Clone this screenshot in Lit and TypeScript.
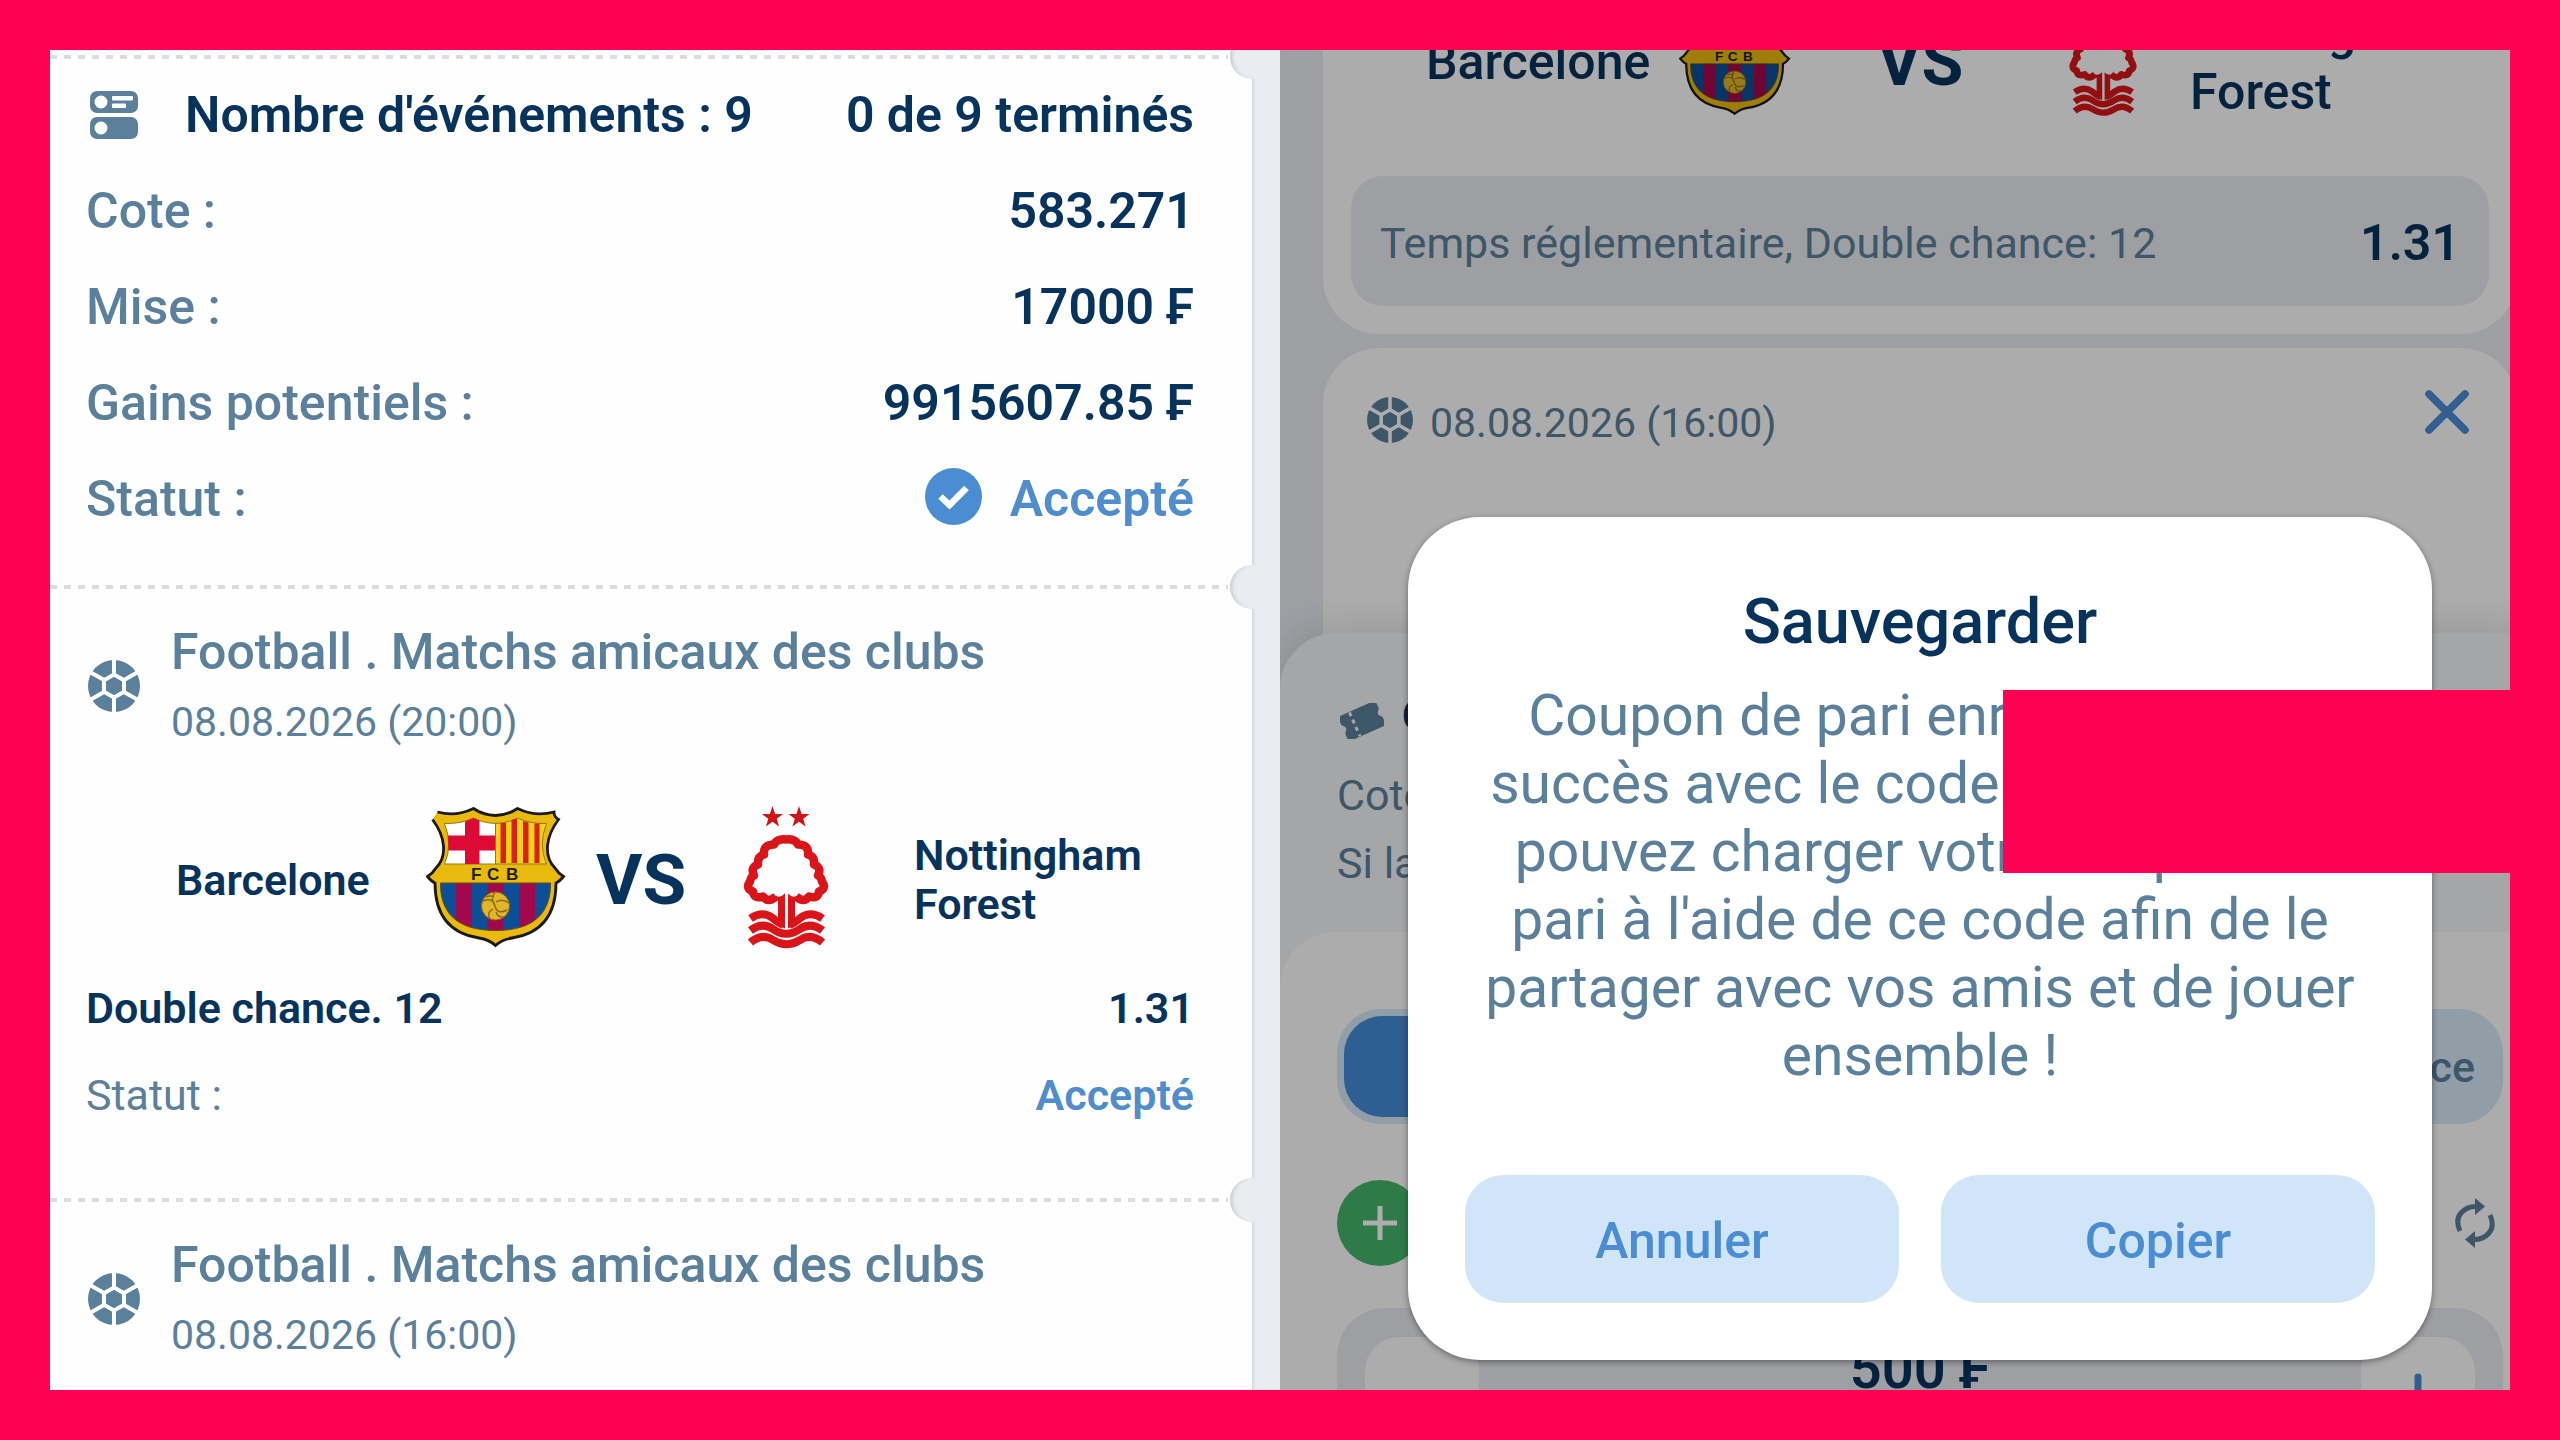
import { LitElement, html, css, svg } from "lit";
import { customElement } from "lit/decorators.js";

const ballIcon = html`<svg class="ball" viewBox="0 0 52 52" aria-hidden="true">
  <circle cx="26" cy="26" r="26" fill="currentColor" />
  <g fill="none" stroke="#fff" stroke-width="4">
    <path d="M26 14.5 36 20.2v11.6L26 37.5 16 31.8V20.2z" />
    <path d="M26 0v15M26 37v15M36 20 50 12M36 32 50 40M16 20 2 12M16 32 2 40" />
  </g>
</svg>`;

const listIcon = html`<svg class="list" viewBox="0 0 48 48" aria-hidden="true">
  <rect width="48" height="22" rx="7" fill="currentColor" />
  <rect y="26" width="48" height="22" rx="7" fill="currentColor" />
  <circle cx="11" cy="11" r="6.500" fill="#fff" />
  <circle cx="11" cy="37" r="6.500" fill="#fff" />
  <rect x="22" y="5" width="21" height="4.500" rx="1" fill="#fff" />
  <rect x="22" y="12.500" width="14" height="4.500" rx="1" fill="#fff" />
</svg>`;

const checkIcon = html`<svg class="check" viewBox="0 0 57 57" aria-hidden="true">
  <circle cx="28.500" cy="28.500" r="28.500" fill="#4a8dd3" />
  <path d="M15.500 28.500 24.500 37 41.500 20" fill="none" stroke="#fff" stroke-width="6.500" />
</svg>`;

const barcelona = html`<svg class="crest" viewBox="0 0 140 140" role="img" aria-label="Barcelone">
  <path
    d="M11.500 5Q30 10 47.500 1.500 57 8 69.500 8.500 82 8 91.500 1.500 109 10 128 5 128 10 132.500 12.500C120 29 117 49 129 61Q132 66 137.500 69.500 133 75 130 76C130 112 112 127 86 131Q76 132.500 69.500 138.500 63 132.500 53 131C27 127 9 112 9 76Q6 75 1.500 69.500 7 66 10 61C22 49 19 29 6.500 12.500 11 10 11.500 5z"
    fill="#e9b90c" stroke="#1c1a14" stroke-width="2.800" />
  <path d="M18.500 16.500Q35 17 47.500 11 57 16 69.500 16.500V57H18.500Q27 38 18.500 16.500z" fill="#fff" stroke="#8b7a20" stroke-width="1" />
  <path d="M39 14.500 47.500 11 53.500 13.500V57H39zM22 28.500H69.500V43.500H22.500z" fill="#dd0a35" />
  <path d="M69.500 16.500Q82 16 91.500 11 104 17 120.500 16.500 112 38 120.500 57H69.500z" fill="#fbd116" stroke="#8b7a20" stroke-width="1" />
  <path d="M74.500 16H80V56H74.500zM85.500 13 91 11.500V56H85.500zM97 14 102.500 15.500V56H97zM108.500 16.500H113.500V56H108.500z" fill="#d8201c" />
  <text class="crest-text" y="72.500"><tspan x="45">F</tspan><tspan x="61">C</tspan><tspan x="80">B</tspan></text>
  <clipPath id="field"><path d="M14.500 76H124.500C125 104 110 123.500 69.500 123.500S14 104 14.500 76z" /></clipPath>
  <g clip-path="url(#field)">
    <rect x="10" y="74" width="120" height="52" fill="#0c4f98" />
    <path d="M30 74H46V126H30zM61.500 74H77.500V126H61.500zM93 74H109V126H93z" fill="#a3084c" />
  </g>
  <path d="M14.500 76H124.500C125 104 110 123.500 69.500 123.500S14 104 14.500 76z" fill="none" stroke="#5a5120" stroke-width="1" />
  <circle cx="69.500" cy="99" r="14" fill="#e2b52a" stroke="#8a6a10" stroke-width="1" />
  <path d="M57 94q10-4 12 5t12 4M69 85.500q-5 6 0 13.500M83 96q-7-5-13-1M64 112q-4-6 3-10M60 90q5-2 8 0M78 110q-6 1-8-5" fill="none" stroke="#8a6a10" stroke-width="1.400" />
</svg>`;

const star = (x: number) => svg`<path transform="translate(${x} 12)" fill="#cf1317"
  d="M0-11.500 2.600-3.600 10.500-3.600 4.200 1.300 6.600 9 0 4.300-6.600 9-4.200 1.300-10.500-3.600-2.600-3.600z" />`;

const forest = html`<svg class="crest" viewBox="0 0 140 143" role="img" aria-label="Nottingham Forest">
  ${star(56.5)}${star(83)}
  <path
    d="M60 91Q52 98 47 91 38 94 37 86 29 83 34 76 35 71 38 70 34 62 42 59 41 51 48 49 47 39 58 39 61 33 70 34 79 33 82 39 93 39 92 49 99 51 98 59 106 62 102 70 105 71 106 76 111 83 103 86 102 94 93 91 88 98 80 91"
    fill="none" stroke="#d9151a" stroke-width="8.500" stroke-linejoin="round" />
  <path d="M59 90Q64 93 69 88V123L62 120V95zM72 88Q76 93 82 90L79 95V120L72 123z" fill="#d9151a" />
  <g fill="none" stroke="#d9151a">
    <path d="M34.500 113Q46 105 56 112 63 118 67 119M106.500 113Q95 105 85 112 78 118 74 119" stroke-width="8" />
    <path d="M34.500 125Q46 116 57 123.500 70 133 84 123.500 95 116 106.500 125" stroke-width="8" />
    <path d="M34.500 137Q46 127 57 134.500 70 143 84 134.500 95 127 106.500 137" stroke-width="8" />
  </g>
</svg>`;

const closeIcon = html`<svg class="close" viewBox="0 0 44 44" aria-hidden="true">
  <path d="M4 4 40 40M40 4 4 40" fill="none" stroke="currentColor" stroke-width="7.500" stroke-linecap="round" />
</svg>`;

const ticketIcon = html`<svg class="coupon-icon" viewBox="0 0 44 36" aria-hidden="true">
  <g transform="rotate(-24 22 18)">
    <path d="M3 6H41V13Q35 18 41 23V30H3V23Q9 18 3 13z" fill="currentColor" stroke="currentColor" stroke-width="3" stroke-linejoin="round" />
    <path d="M14 5V31" stroke="#f3f5f7" stroke-width="3" stroke-dasharray="4 4" />
  </g>
</svg>`;

const plusIcon = html`<svg class="plus" viewBox="0 0 34 34" aria-hidden="true">
  <path d="M17 0V34M0 17H34" fill="none" stroke="currentColor" stroke-width="5" />
</svg>`;

const refreshIcon = html`<svg class="refresh" viewBox="0 0 40 50" aria-hidden="true">
  <g fill="none" stroke="currentColor" stroke-width="5">
    <path d="M5 33Q0 22 6 15 12 8 22 8.500" />
    <path d="M35 17Q40 28 34 35 28 42 18 41.500" />
  </g>
  <path d="M20 0 30 8.500 20 17zM20 33 10 41.500 20 50z" fill="currentColor" />
</svg>`;

const minusStep = html`<svg class="step-icon" viewBox="0 0 42 42" aria-hidden="true">
  <path d="M4 21H38" fill="none" stroke="currentColor" stroke-width="7" stroke-linecap="round" />
</svg>`;

const plusStep = html`<svg class="step-icon" viewBox="0 0 42 42" aria-hidden="true">
  <path d="M4 21H38M21 4V38" fill="none" stroke="currentColor" stroke-width="7" stroke-linecap="round" />
</svg>`;

const shared = css`
  * {
    box-sizing: border-box;
  }
  svg {
    display: block;
    flex: none;
  }
  button {
    border: 0;
    margin: 0;
    padding: 0;
    font: inherit;
    color: inherit;
    background: none;
    cursor: pointer;
  }
  h2,
  p {
    margin: 0;
    font: inherit;
  }
  .crest-text {
    font: 700 17px "Liberation Sans", Arial, sans-serif;
    fill: #221f14;
  }
`;

/** Summary of a placed bet followed by its events. */
@customElement("bet-ticket")
export class BetTicket extends LitElement {
  static styles = [
    shared,
    css`
      :host {
        display: block;
        overflow: hidden;
        padding: 0 28px;
        background: #e9edf2;
      }
      .ticket {
        min-height: 100%;
        padding-top: 55px;
        background: #fefefe;
        box-shadow: 0 0 4px #b4bac2;
      }
      .divider {
        position: relative;
        height: 4px;
        margin: 0 24px 0 8px;
        background: repeating-linear-gradient(90deg, #d9dce0 0 7px, transparent 7px 14px);
      }
      .notch {
        position: absolute;
        top: -20px;
        right: -54px;
        width: 52px;
        height: 44px;
        border-radius: 22px 0 0 22px;
        background: #e9edf2;
        box-shadow: inset 5px 0 4px -3px #c4c9d0;
      }
      .section {
        padding: 8px 58px 38px;
      }
      .row {
        display: flex;
        align-items: center;
        height: 96px;
        color: #5b809b;
        font-size: 50px;
        font-weight: 500;
      }
      .value {
        display: flex;
        align-items: center;
        gap: 28px;
        margin-left: auto;
        color: #05335c;
        font-weight: 600;
      }
      .count {
        margin-left: 47px;
        color: #05335c;
        font-weight: 600;
      }
      .list {
        width: 48px;
        height: 48px;
        margin-left: 4px;
      }
      .check {
        width: 57px;
        height: 57px;
        margin-bottom: 6px;
      }
      .value.accepted,
      .accepted {
        color: #4f8dcd;
      }
      .event {
        padding: 25px 58px 50px;
      }
      .head {
        display: flex;
        align-items: center;
        gap: 31px;
        padding-left: 2px;
        color: #5b809b;
      }
      .ball {
        width: 52px;
        height: 52px;
        margin-top: 4px;
      }
      .league {
        line-height: 76px;
        font-size: 50px;
        font-weight: 500;
      }
      .date {
        line-height: 64px;
        font-size: 41px;
      }
      .teams {
        display: grid;
        grid-template-columns: 218px 138px 88px 140px 1fr;
        column-gap: 32px;
        align-items: center;
        height: 190px;
        margin-top: 30px;
        padding: 2px 0 0 90px;
        color: #05335c;
        font-size: 43px;
        font-weight: 600;
        line-height: 49px;
      }
      .away {
        padding-left: 26px;
      }
      .crest {
        width: 140px;
        height: 144px;
        margin-bottom: 6px;
      }
      .vs {
        font-size: 71px;
        font-weight: 700;
        line-height: 80px;
      }
      .line {
        display: flex;
        justify-content: space-between;
        align-items: center;
        height: 106px;
        color: #5b809b;
        font-size: 43px;
      }
      .market {
        height: 68px;
        color: #05335c;
        font-weight: 600;
      }
      .line .accepted {
        font-weight: 600;
      }
    `,
  ];

  private divider() {
    return html`<div class="divider"><span class="notch"></span></div>`;
  }

  private event(time: string) {
    return html`<section class="event">
      <div class="head">
        ${ballIcon}
        <div>
          <div class="league">Football . Matchs amicaux des clubs</div>
          <div class="date">08.08.2026 (${time})</div>
        </div>
      </div>
      <div class="teams">
        <span>Barcelone</span>
        ${barcelona}
        <span class="vs">VS</span>
        ${forest}
        <span class="away">Nottingham<br />Forest</span>
      </div>
      <div class="line market"><span>Double chance. 12</span><span>1.31</span></div>
      <div class="line"><span>Statut :</span><span class="accepted">Accepté</span></div>
    </section>`;
  }

  private eventHead(time: string) {
    return html`<section class="event">
      <div class="head">
        ${ballIcon}
        <div>
          <div class="league">Football . Matchs amicaux des clubs</div>
          <div class="date">08.08.2026 (${time})</div>
        </div>
      </div>
    </section>`;
  }

  render() {
    return html`<article class="ticket">
      ${this.divider()}
      <section class="section">
        <div class="row">
          ${listIcon}<span class="count">Nombre d'événements : 9</span>
          <span class="value">0 de 9 terminés</span>
        </div>
        <div class="row"><span>Cote :</span><span class="value">583.271</span></div>
        <div class="row"><span>Mise :</span><span class="value">17000 ₣</span></div>
        <div class="row"><span>Gains potentiels :</span><span class="value">9915607.85 ₣</span></div>
        <div class="row"><span>Statut :</span><span class="value accepted">${checkIcon}Accepté</span></div>
      </section>
      ${this.divider()} ${this.event("20:00")} ${this.divider()} ${this.eventHead("16:00")}
    </article>`;
  }
}

/** Coupon builder with its save confirmation. */
@customElement("bet-coupon")
export class BetCoupon extends LitElement {
  static styles = [
    shared,
    css`
      :host {
        position: relative;
        display: flex;
        flex-direction: column;
        overflow: hidden;
        background: #e7ebf1;
        color: #5b809b;
      }
      .events {
        display: flex;
        flex: 1;
        flex-direction: column;
        gap: 14px;
        min-height: 0;
        padding: 0 43px;
      }
      .card {
        padding: 0 28px 28px;
        border-radius: 0 0 56px 56px;
        background: #fefefe;
      }
      .card.next {
        flex: 1;
        border-radius: 56px 56px 0 0;
      }
      .teams {
        display: flex;
        align-items: center;
        height: 124px;
        padding-left: 75px;
        color: #05335c;
        font-size: 50px;
        font-weight: 500;
        line-height: 60px;
      }
      .home {
        width: 253px;
      }
      .crest {
        width: 112px;
        height: 114px;
        margin-bottom: 6px;
      }
      .teams .vs {
        width: 170px;
        margin-left: 86px;
        font-size: 68px;
        font-weight: 700;
      }
      .away {
        margin-left: 31px;
      }
      .odds {
        display: flex;
        align-items: center;
        justify-content: space-between;
        height: 130px;
        margin-top: 52px;
        padding: 3px 29px 0;
        border-radius: 32px;
        background: #e7ebf1;
        font-size: 43px;
      }
      .odd {
        color: #05335c;
        font-size: 50px;
        font-weight: 600;
      }
      .kickoff {
        display: flex;
        align-items: center;
        gap: 17px;
        padding: 42px 20px 0 16px;
        font-size: 41px;
        line-height: 52px;
      }
      .kickoff-time {
        padding-top: 6px;
      }
      .ball {
        width: 46px;
        height: 46px;
      }
      .remove {
        margin-left: auto;
        margin-bottom: 16px;
        color: #4a8dd3;
      }
      .close {
        width: 44px;
        height: 44px;
      }
      .sheet {
        margin: -60px 0 -40px;
        border-radius: 56px 56px 0 0;
        background: #f3f5f7;
        box-shadow: 0 -6px 40px rgba(0, 0, 0, 0.12);
        z-index: 0;
      }
      .summary {
        padding: 54px 57px 35px;
        font-size: 43px;
        line-height: 68px;
      }
      .summary-title {
        display: flex;
        align-items: center;
        gap: 18px;
        margin-bottom: 6px;
        padding-left: 3px;
      }
      .summary-title b {
        padding-bottom: 12px;
        color: #05335c;
        font-weight: 700;
        line-height: 56px;
      }
      .coupon-icon {
        width: 44px;
        height: 36px;
      }
      .stake {
        padding: 77px 57px 0;
        border-radius: 56px 56px 0 0;
        background: #fefefe;
      }
      .tabs {
        display: grid;
        grid-template-columns: 1fr 1fr;
        height: 115px;
        padding: 7px;
        border-radius: 44px;
        background: #d6e9f8;
        font-size: 43px;
        font-weight: 500;
      }
      .tab {
        padding-right: 21px;
        border-radius: 38px;
        text-align: right;
      }
      .tab.active {
        background: #458cd8;
        color: #fff;
      }
      .actions {
        display: flex;
        align-items: center;
        justify-content: space-between;
        padding: 56px 8px 42px 0;
      }
      .add {
        display: grid;
        place-items: center;
        width: 86px;
        height: 86px;
        border-radius: 50%;
        background: #45b66a;
        color: #fff;
      }
      .plus {
        width: 34px;
        height: 34px;
      }
      .refresh {
        width: 40px;
        height: 50px;
      }
      .amount {
        display: grid;
        grid-template-columns: 114px 1fr 114px;
        padding: 29px 28px;
        border-radius: 48px;
        background: #e7ebf1;
        color: #05335c;
        font-size: 56px;
        font-weight: 600;
        line-height: 64px;
        text-align: center;
      }
      .step {
        display: grid;
        place-items: center;
        height: 114px;
        border-radius: 34px;
        background: #fefefe;
        color: #4a8dd3;
      }
      .step-icon {
        width: 42px;
        height: 42px;
      }
      .scrim {
        position: absolute;
        inset: 0;
        z-index: 1;
        display: grid;
        place-items: end center;
        padding-bottom: 80px;
        background: rgba(0, 0, 0, 0.32);
      }
      .dialog {
        width: 80%;
        padding: 65px 57px 57px;
        border-radius: 72px;
        background: #fff;
        box-shadow: 0 2px 6px rgba(0, 0, 0, 0.4);
        text-align: center;
      }
      .dialog h2 {
        margin-bottom: 20px;
        color: #05335c;
        font-size: 63px;
        font-weight: 500;
        line-height: 80px;
      }
      .message {
        font-size: 57px;
        line-height: 68px;
      }
      .code {
        display: inline-block;
        width: 222px;
      }
      .buttons {
        display: grid;
        grid-template-columns: 1fr 1fr;
        gap: 42px;
        margin-top: 85px;
      }
      .button {
        height: 128px;
        padding-top: 4px;
        border-radius: 38px;
        background: #d1e5f9;
        color: #4a8dd3;
        font-size: 50px;
        font-weight: 500;
      }
    `,
  ];

  render() {
    return html`
      <div class="events">
        <article class="card">
          <div class="teams">
            <span class="home">Barcelone</span>
            ${barcelona}
            <span class="vs">VS</span>
            ${forest}
            <span class="away">Nottingham<br />Forest</span>
          </div>
          <div class="odds">
            <span>Temps réglementaire, Double chance: 12</span>
            <span class="odd">1.31</span>
          </div>
        </article>
        <article class="card next">
          <div class="kickoff">
            ${ballIcon}<span class="kickoff-time">08.08.2026 (16:00)</span>
            <button class="remove" aria-label="Supprimer">${closeIcon}</button>
          </div>
        </article>
      </div>
      <section class="sheet">
        <div class="summary">
          <div class="summary-title">${ticketIcon}<b>C</b></div>
          <div>Cote</div>
          <div>Si la</div>
        </div>
        <div class="stake">
          <div class="tabs">
            <button class="tab active" aria-label="Mise"></button>
            <button class="tab">ce</button>
          </div>
          <div class="actions">
            <button class="add" aria-label="Ajouter">${plusIcon}</button>
            <button aria-label="Actualiser">${refreshIcon}</button>
          </div>
          <div class="amount">
            <button class="step" aria-label="Diminuer">${minusStep}</button>
            <span>500 ₣</span>
            <button class="step" aria-label="Augmenter">${plusStep}</button>
          </div>
        </div>
      </section>
      <div class="scrim">
        <div class="dialog" role="dialog" aria-labelledby="save-title">
          <h2 id="save-title">Sauvegarder</h2>
          <p class="message">
            Coupon de pari enregistré avec<br />
            succès avec le code<span class="code"></span>Vous<br />
            pouvez charger votre coupon de<br />
            pari à l'aide de ce code afin de le<br />
            partager avec vos amis et de jouer<br />
            ensemble !
          </p>
          <div class="buttons">
            <button class="button">Annuler</button>
            <button class="button">Copier</button>
          </div>
        </div>
      </div>
    `;
  }
}

@customElement("app-root")
export class AppRoot extends LitElement {
  static styles = css`
    :host {
      position: relative;
      display: grid;
      grid-template-columns: 1fr 1fr;
      grid-template-rows: 100%;
      height: 100vh;
      overflow: hidden;
      font-family: Roboto, "Noto Sans", sans-serif;
    }
    .frame {
      position: absolute;
      inset: 0;
      z-index: 2;
      border: 50px solid #ff0052;
      pointer-events: none;
    }
    .redaction {
      position: absolute;
      top: 640px;
      right: 0;
      width: 507px;
      height: 183px;
      background: #ff0052;
    }
  `;

  render() {
    return html`
      <bet-ticket></bet-ticket>
      <bet-coupon></bet-coupon>
      <div class="frame"><div class="redaction"></div></div>
    `;
  }
}
